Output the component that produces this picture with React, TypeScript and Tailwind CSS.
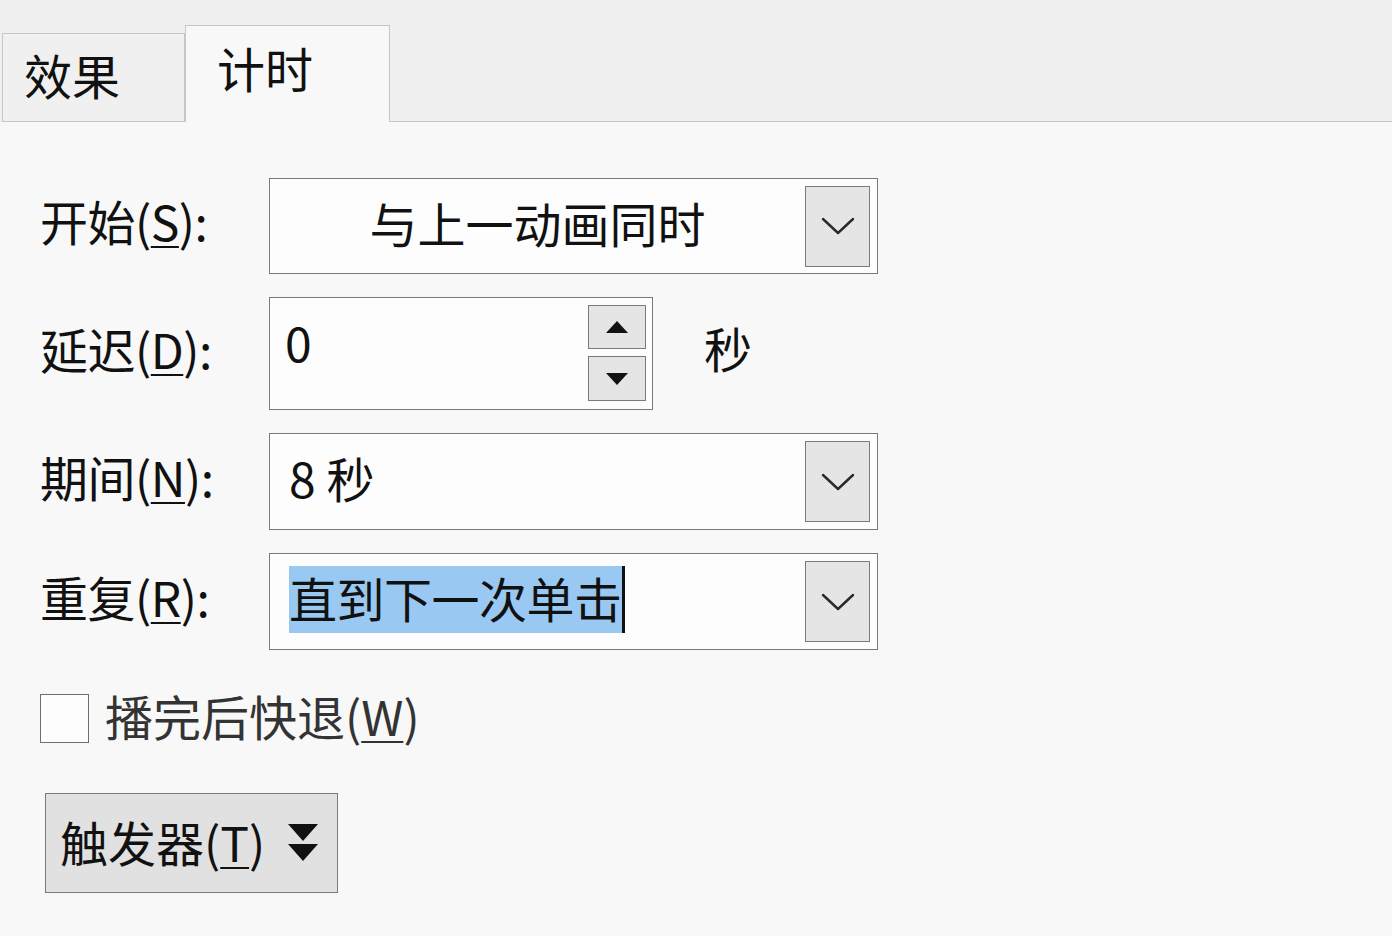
import React from "react"

const font = "font-['Noto_Sans_CJK_SC','Noto_Sans',sans-serif]"

function Chevron() {
  return (
    <svg width="34" height="18" viewBox="0 0 34 18" fill="none">
      <path d="M2 2 L17 16 L32 2" stroke="#2a2a2a" strokeWidth="2.4" strokeLinecap="round" strokeLinejoin="round" />
    </svg>
  )
}

function DropButton() {
  return (
    <div className="w-[65px] h-[81px] bg-[#e5e5e5] border border-[#7a7a7a] flex items-center justify-center">
      <Chevron />
    </div>
  )
}

function Label({ text, k }: { text: string; k: string }) {
  return (
    <div className="w-[229px] mb-[12px] text-[48px] leading-none text-[#111] tracking-[-0.5px]">
      {text}(<span className="underline underline-offset-[5px] decoration-[2px]">{k}</span>):
    </div>
  )
}

export default function App() {
  return (
    <div className={`w-[1392px] h-[936px] bg-[#f8f8f8] ${font} text-[#111] overflow-hidden`}>
      {/* tab strip */}
      <div className="flex items-end h-[122px] bg-[#f0f0f0]">
        <div className="ml-[2px] w-[183px] h-[89px] border border-[#c6c6c6] bg-[#f0f0f0] flex items-center pl-[21px] pb-[8px] text-[48px] leading-none">
          效果
        </div>
        <div className="w-[205px] h-[97px] border-t border-x border-[#c6c6c6] bg-[#f8f8f8] flex items-center pl-[31px] pb-[14px] text-[48px] leading-none">
          计时
        </div>
        <div className="flex-1 border-b border-[#c6c6c6]" />
      </div>

      <div className="flex flex-col pl-[40px] pt-[56px]">
        {/* start */}
        <div className="flex items-center">
          <Label text="开始" k="S" />
          <div className="w-[609px] h-[96px] bg-[#fdfdfd] border border-[#7a7a7a] flex items-center pr-[7px]">
            <div className="flex-1 mb-[8px] text-center text-[48px] leading-none">与上一动画同时</div>
            <DropButton />
          </div>
        </div>

        {/* delay */}
        <div className="flex items-center mt-[23px]">
          <Label text="延迟" k="D" />
          <div className="w-[384px] h-[113px] bg-[#fdfdfd] border border-[#7a7a7a] flex pr-[6px]">
            <div className="flex-1 pl-[15px] pt-[19px] text-[48px] leading-none">0</div>
            <div className="flex flex-col pt-[7px] gap-[7px]">
              <div className="w-[58px] h-[44px] bg-[#e5e5e5] border border-[#7a7a7a] flex items-center justify-center">
                <svg width="22" height="12" viewBox="0 0 22 12">
                  <polygon points="11,0 22,12 0,12" fill="#111" />
                </svg>
              </div>
              <div className="w-[58px] h-[45px] bg-[#e5e5e5] border border-[#7a7a7a] flex items-center justify-center">
                <svg width="22" height="12" viewBox="0 0 22 12">
                  <polygon points="0,0 22,0 11,12" fill="#111" />
                </svg>
              </div>
            </div>
          </div>
          <div className="ml-[51px] mb-[14px] text-[48px] leading-none">秒</div>
        </div>

        {/* duration */}
        <div className="flex items-center mt-[23px]">
          <Label text="期间" k="N" />
          <div className="w-[609px] h-[97px] bg-[#fdfdfd] border border-[#7a7a7a] flex items-center pr-[7px]">
            <div className="flex-1 pl-[19px] mb-[10px] text-[48px] leading-none">8 秒</div>
            <DropButton />
          </div>
        </div>

        {/* repeat */}
        <div className="flex items-center mt-[23px]">
          <Label text="重复" k="R" />
          <div className="w-[609px] h-[97px] bg-[#fdfdfd] border border-[#7a7a7a] flex items-center pr-[7px]">
            <div className="flex-1 pl-[19px] mb-[4px] flex items-center">
              <span className="bg-[#99c9f2] h-[67px] pb-[6px] flex items-center text-[48px] leading-none tracking-[-0.5px]">
                直到下一次单击
              </span>
              <span className="w-[3px] h-[67px] bg-[#111]" />
            </div>
            <DropButton />
          </div>
        </div>

        {/* rewind */}
        <div className="flex items-center mt-[44px] h-[49px]">
          <div className="w-[49px] h-[49px] bg-[#fdfdfd] border border-[#6e6e6e]" />
          <div className="ml-[16px] mb-[8px] text-[48px] leading-none text-[#333]">
            播完后快退(<span className="underline underline-offset-[5px] decoration-[2px]">W</span>)
          </div>
        </div>

        {/* trigger */}
        <div className="mt-[50px] ml-[5px] w-[293px] h-[100px] bg-[#e1e1e1] border border-[#7a7a7a] flex items-center pl-[14px]">
          <span className="mb-[4px] text-[48px] leading-none">
            触发器(<span className="underline underline-offset-[5px] decoration-[2px]">T</span>)
          </span>
          <svg className="ml-[22px]" width="32" height="40" viewBox="0 0 32 40">
            <polygon points="1,1 31,1 16,18" fill="#111" />
            <polygon points="1,21 31,21 16,38" fill="#111" />
          </svg>
        </div>
      </div>
    </div>
  )
}
